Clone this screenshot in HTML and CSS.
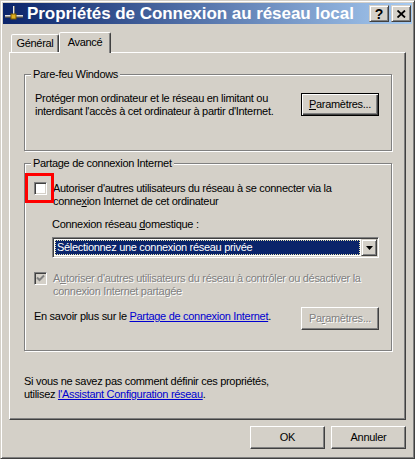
FILE: index.html
```html
<!DOCTYPE html>
<html lang="fr">
<head>
<meta charset="utf-8">
<title>Propriétés de Connexion au réseau local</title>
<link rel="stylesheet" href="styles.css">
</head>
<body>
<div class="window">
  <div class="titlebar">
    <svg class="ticon" width="18" height="15" viewBox="0 0 18 15">
      <rect x="0" y="9" width="18" height="1" fill="#e0e0e0"/>
      <rect x="0" y="10" width="18" height="1" fill="#9a9a9a"/>
      <rect x="0" y="11" width="18" height="1" fill="#505050"/>
      <rect x="8" y="0" width="1" height="9" fill="#e8e8e8"/>
      <rect x="9" y="0" width="1" height="9" fill="#707070"/>
      <rect x="6" y="8" width="5" height="5" fill="#e0b020" stroke="#7a5a00" stroke-width="1"/>
    </svg>
    <span class="title">Propriétés de Connexion au réseau local</span>
    <div class="capbtns">
      <span class="capbtn">?</span>
      <span class="capbtn">
        <svg width="9" height="8" viewBox="0 0 9 8"><path d="M0.5 0.5 L8 7.5 M8 0.5 L0.5 7.5" stroke="#000" stroke-width="1.8" fill="none"/></svg>
      </span>
    </div>
  </div>
  <div class="client">
    <div class="tabs">
      <div class="tab">Général</div>
      <div class="tab active">Avancé</div>
    </div>
    <div class="panel">
      <fieldset class="group g1">
        <legend>Pare-feu Windows</legend>
        <div class="row">
          <p class="text">Protéger mon ordinateur et le réseau en limitant ou<br>interdisant l'accès à cet ordinateur à partir d'Internet.</p>
          <button class="btn default"><u>P</u>aramètres...</button>
        </div>
      </fieldset>
      <fieldset class="group g2">
        <legend>Partage de connexion Internet</legend>
        <div class="check">
          <span class="box"><span class="highlight"></span></span>
          <span class="check-text">Autoriser d'autres utilisateurs du réseau à se connecter via la<br>conne<u>x</u>ion Internet de cet ordinateur</span>
        </div>
        <div class="field-label">Connexion réseau <u>d</u>omestique :</div>
        <div class="select">
          <span class="sel-value">Sélectionnez une connexion réseau privée</span>
          <span class="arrow"><svg width="7" height="4" viewBox="0 0 7 4"><polygon points="0,0 7,0 3.5,4" fill="#000"/></svg></span>
        </div>
        <div class="check disabled">
          <span class="box"><svg width="9" height="9" viewBox="0 0 9 9"><path d="M1 3.5 L3.5 6 L8 1.5" stroke="#808080" stroke-width="2" fill="none"/></svg></span>
          <span class="check-text">A<u>u</u>toriser d'autres utilisateurs du réseau à contrôler ou désactiver la<br>connexion Internet partagée</span>
        </div>
        <div class="info">
          <span class="info-text">En savoir plus sur le <a href="#">Partage de connexion Internet</a>.</span>
          <button class="btn" disabled>Pa<u>r</u>amètres...</button>
        </div>
      </fieldset>
      <p class="hint">Si vous ne savez pas comment définir ces propriétés,<br>utilisez <a href="#">l'Assistant Configuration réseau</a>.</p>
    </div>
    <div class="actions">
      <button class="btn wide">OK</button>
      <button class="btn wide">Annuler</button>
    </div>
  </div>
</div>
</body>
</html>
```
FILE: styles.css
```css
body {
  margin: 0;
  background: #d4d0c8;
  font-family: "Liberation Sans", Arial, sans-serif;
  font-size: 11px;
  line-height: 13px;
  letter-spacing: -0.3px;
  color: #000;
}

.window {
  width: 415px;
  height: 459px;
  box-sizing: border-box;
  border: 1px solid;
  border-color: #d4d0c8 #404040 #404040 #d4d0c8;
  box-shadow: inset 1px 1px #fff, inset -1px -1px #808080;
  padding: 2px;
  display: flex;
  flex-direction: column;
  background: #d4d0c8;
}

.titlebar {
  height: 21px;
  flex: none;
  display: flex;
  align-items: center;
  padding-left: 2px;
  background: linear-gradient(to right, #0a246a, #a6caf0);
  color: #fff;
}

.ticon {
  flex: none;
  display: block;
}

.title {
  flex: 1;
  margin-left: 4px;
  font-size: 17px;
  font-weight: bold;
  line-height: 21px;
  letter-spacing: -0.05px;
  white-space: nowrap;
}

.capbtns {
  display: flex;
  gap: 2px;
  margin-right: 1px;
  align-self: flex-start;
  margin-top: 2px;
}

.capbtn {
  width: 20px;
  height: 17px;
  box-sizing: border-box;
  background: #d4d0c8;
  border: 1px solid;
  border-color: #d4d0c8 #404040 #404040 #d4d0c8;
  box-shadow: inset 1px 1px #fff, inset -1px -1px #808080;
  display: flex;
  align-items: center;
  justify-content: center;
  color: #000;
  font-size: 14px;
  font-weight: bold;
  line-height: 14px;
  letter-spacing: 0;
}

.client {
  flex: 1;
  display: flex;
  flex-direction: column;
  padding: 8px 6px 0;
}

.tabs {
  display: flex;
  align-items: flex-end;
  height: 20px;
  padding-left: 2px;
}

.tab {
  box-sizing: border-box;
  width: 48px;
  height: 18px;
  line-height: 16px;
  text-align: center;
  border: 1px solid;
  border-bottom: 0;
  border-color: #fff #404040 transparent #fff;
  box-shadow: inset -1px 0 #808080;
  border-radius: 2px 2px 0 0;
  background: #d4d0c8;
}

.tab.active {
  width: 52px;
  height: 21px;
  line-height: 18px;
  margin-bottom: -1px;
  position: relative;
  z-index: 1;
}

.panel {
  box-sizing: border-box;
  height: 368px;
  border: 1px solid;
  border-color: #fff #404040 #404040 #fff;
  box-shadow: inset -1px -1px #808080;
  padding: 0 13px 0 14px;
  display: flex;
  flex-direction: column;
}

.group {
  margin: 0;
  min-width: 0;
  border: 1px solid #808080;
  box-shadow: 1px 1px #fff, inset 1px 1px #fff;
}

.group legend {
  padding: 0 2px;
  line-height: 14px;
  background: #d4d0c8;
}

.g1 {
  margin-top: 14px;
  padding: 11px 12px 32px 10px;
}

.g1 legend {
  margin-left: -4px;
}

.g2 {
  margin-top: 5px;
  padding: 12px 12px 20px 9px;
}

.g2 legend {
  margin-left: -3px;
}

.row {
  display: flex;
  justify-content: space-between;
  align-items: flex-start;
}

.text {
  margin: 0;
  white-space: nowrap;
}

.btn {
  box-sizing: border-box;
  width: 78px;
  height: 23px;
  padding: 0;
  background: #d4d0c8;
  border: 1px solid;
  border-color: #fff #404040 #404040 #fff;
  box-shadow: inset -1px -1px #808080;
  font: inherit;
  letter-spacing: inherit;
  color: #000;
}

.row .btn {
  margin-top: 1px;
}

.btn.default {
  border-color: #000;
  box-shadow: inset 1px 1px #fff, inset -1px -1px #404040, inset -2px -2px #808080;
}

.btn:disabled {
  color: #808080;
  text-shadow: 1px 1px 0 #fff;
}

.check {
  display: flex;
  align-items: flex-start;
}

.check-text {
  white-space: nowrap;
}

.check.disabled {
  margin-top: 14px;
  color: #808080;
  text-shadow: 1px 1px 0 #fff;
}

.box {
  position: relative;
  flex: none;
  width: 13px;
  height: 13px;
  box-sizing: border-box;
  margin-right: 6px;
  background: #fff;
  border: 1px solid;
  border-color: #808080 #fff #fff #808080;
  box-shadow: inset 1px 1px #404040, inset -1px -1px #d4d0c8;
}

.box svg {
  display: block;
  margin: 1px 0 0 1px;
}

.check.disabled .box {
  background: #d4d0c8;
}

.highlight {
  position: absolute;
  left: -10px;
  top: -10px;
  width: 29px;
  height: 30px;
  box-sizing: border-box;
  border: 3px solid #f00;
}

.field-label {
  margin: 10px 0 0 18px;
}

.select {
  display: flex;
  box-sizing: border-box;
  width: 327px;
  height: 21px;
  margin: 6px 0 0 18px;
  padding: 2px;
  background: #fff;
  border: 1px solid;
  border-color: #808080 #fff #fff #808080;
  box-shadow: inset 1px 1px #404040, inset -1px -1px #d4d0c8;
}

.sel-value {
  flex: 1;
  margin-right: 1px;
  padding-left: 1px;
  background: #0a246a;
  color: #fff;
  border: 1px dotted #e8e4b0;
  white-space: nowrap;
}

.arrow {
  flex: none;
  width: 16px;
  margin: -1px -1px -1px 0;
  box-sizing: border-box;
  background: #d4d0c8;
  border: 1px solid;
  border-color: #d4d0c8 #404040 #404040 #d4d0c8;
  box-shadow: inset 1px 1px #fff, inset -1px -1px #808080;
  display: flex;
  align-items: center;
  justify-content: center;
}

.arrow svg {
  display: block;
}

.info {
  display: flex;
  justify-content: space-between;
  align-items: flex-start;
  margin-top: 9px;
}

.info-text {
  margin-top: 3px;
  white-space: nowrap;
}

a {
  color: #0000d0;
  text-decoration: underline;
}

.hint {
  margin: 24px 0 0;
  white-space: nowrap;
}

.actions {
  display: flex;
  justify-content: flex-end;
  gap: 6px;
  margin-top: 6px;
}

.btn.wide {
  width: 75px;
}
```
